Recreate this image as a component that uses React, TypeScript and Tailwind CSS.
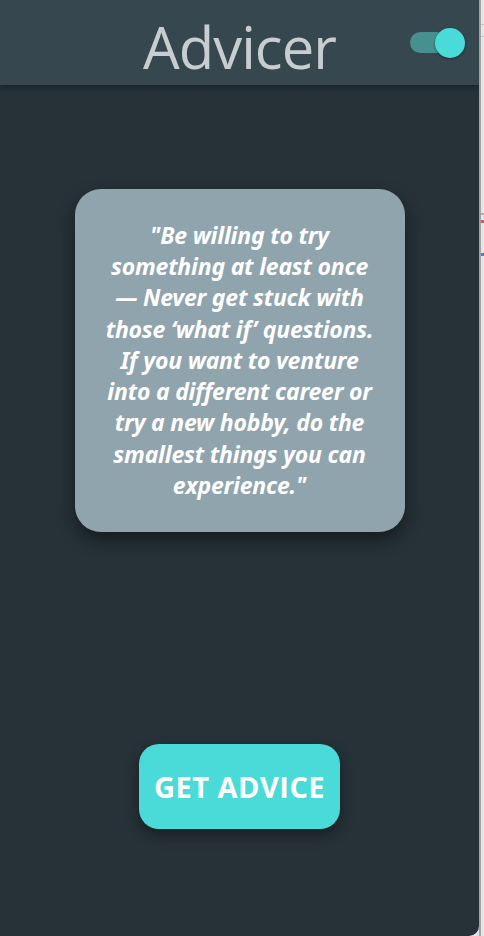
import { useState } from "react";

const quote =
  "\"Be willing to try something at least once — Never get stuck with those ‘what if’ questions. If you want to venture into a different career or try a new hobby, do the smallest things you can experience.\"";

export default function App() {
  const [dark, setDark] = useState(true);

  return (
    <div className="flex h-[936px] w-[484px] bg-[#e3e3e3] font-['Open_Sans',sans-serif]">
      <div className="flex w-[479px] flex-col overflow-hidden rounded-br-[10px] bg-[#263238]">
        <header className="relative flex h-[85px] items-center justify-center bg-[#37474f] shadow-[0_2px_6px_rgba(0,0,0,0.35)]">
          <h1 className="mt-[9px] text-[58px] font-normal leading-none tracking-[-1px] text-[#c7cdd0]">Advicer</h1>
          <button
            onClick={() => setDark(!dark)}
            className="absolute right-[14px] top-[28px] h-[30px] w-[55px]"
            aria-label="Toggle theme"
          >
            <span className="absolute left-0 top-[4px] h-[21px] w-[37px] rounded-full bg-[#46918f]" />
            <span className="absolute right-0 top-0 h-[30px] w-[30px] rounded-full bg-[#4adbd9] shadow-[0_1px_3px_rgba(0,0,0,0.4)]" />
          </button>
        </header>

        <main className="flex flex-1 flex-col items-center">
          <div className="mt-[104px] flex h-[343px] w-[330px] items-center justify-center rounded-[26px] bg-[#90a4ae] px-[28px] shadow-[0_8px_18px_rgba(0,0,0,0.45)]">
            <p className="text-center font-['Noto_Sans',sans-serif] text-[23px] font-bold italic leading-[31.3px] tracking-[-0.2px] text-white">
              {quote}
            </p>
          </div>

          <button className="mt-[212px] h-[85px] w-[201px] rounded-[20px] bg-[#4adbd9] text-[29px] font-bold tracking-[0.5px] text-white shadow-[0_6px_14px_rgba(0,0,0,0.4)]">
            GET ADVICE
          </button>
        </main>
      </div>
      <div className="w-[2px] bg-[#a2a2a2]" />
      <div className="flex w-[3px] flex-col bg-[#e6e6e6]">
        <div className="mt-[24px] h-px bg-[#c4c4c4]" />
        <div className="mt-[11px] h-px bg-[#c4c4c4]" />
        <div className="mt-[176px] h-[2px] bg-[#b0b0b0]" />
        <div className="mt-[5px] h-[3px] bg-[#e05060]" />
        <div className="mt-[30px] h-[3px] bg-[#5a78c8]" />
      </div>
    </div>
  );
}
